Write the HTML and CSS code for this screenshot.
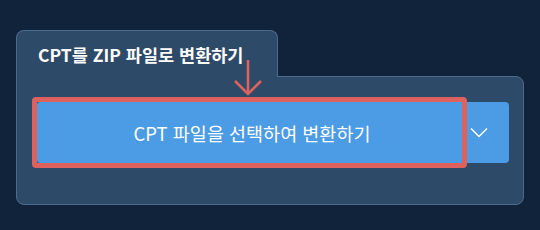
FILE: index.html
```html
<!DOCTYPE html>
<html lang="ko">
<head>
  <meta charset="UTF-8">
  <title>CPT를 ZIP 파일로 변환하기</title>
  <link rel="stylesheet" href="styles.css">
</head>
<body>

  <div class="converter">
    <!-- Tab header -->
    <div class="tab">
      <h2 class="tab-title">CPT를 ZIP 파일로 변환하기</h2>
    </div>

    <!-- Panel with split button -->
    <div class="panel">
      <div class="split-button">
        <button class="btn-main">CPT 파일을 선택하여 변환하기</button>
        <button class="btn-toggle" aria-label="옵션">
          <svg width="18" height="11" viewBox="0 0 18 11">
            <polyline points="1,1.5 9,9.5 17,1.5" fill="none" stroke="#ffffff" stroke-width="1.5"/>
          </svg>
        </button>
      </div>
    </div>

    <!-- Pointer arrow -->
    <svg class="pointer-arrow" width="30" height="40" viewBox="0 0 30 40">
      <line x1="15" y1="1" x2="15" y2="35" stroke="#dd625e" stroke-width="2.6"/>
      <polyline points="2,22 15,35 28,22" fill="none" stroke="#dd625e" stroke-width="2.6"/>
    </svg>
  </div>

</body>
</html>
```

FILE: styles.css
```css
body {
  margin: 0;
  background-color: #11233a;
  font-family: "Noto Sans CJK KR", "Noto Sans", sans-serif;
}

.converter {
  position: relative;
  width: 508px;
  padding: 30px 0 0 16px;
}

.tab {
  position: relative;
  z-index: 1;
  box-sizing: border-box;
  width: 262px;
  height: 47px;
  margin-bottom: -1px;
  padding: 11px 0 0 21px;
  background-color: #2d4a69;
  border: 1px solid #4e6a8b;
  border-bottom: none;
  border-radius: 8px 8px 0 0;
}

.tab-title {
  margin: 0;
  font-size: 17.5px;
  line-height: 25px;
  font-weight: bold;
  color: #ffffff;
  white-space: nowrap;
}

.panel {
  box-sizing: border-box;
  height: 129px;
  padding: 25px 14px 0 20px;
  background-color: #2d4a69;
  border: 1px solid #4e6a8b;
  border-radius: 0 8px 8px 8px;
}

.split-button {
  display: flex;
  height: 61px;
}

.btn-main {
  position: relative;
  flex: 1;
  border: none;
  border-radius: 3px 0 0 3px;
  background-color: #4c9be5;
  color: #ffffff;
  font-family: inherit;
  font-size: 18.5px;
  padding: 0;
  cursor: pointer;
}

/* highlight ring drawn over the main button */
.btn-main::after {
  content: "";
  position: absolute;
  left: -5px;
  top: -5px;
  bottom: -5px;
  right: 0;
  border: 5px solid #dd625e;
  border-radius: 4px;
}

.btn-toggle {
  display: flex;
  align-items: center;
  width: 42px;
  padding: 0 0 0 3px;
  border: none;
  border-radius: 0 4px 4px 0;
  background-color: #4c9be5;
  cursor: pointer;
}

.pointer-arrow {
  position: absolute;
  left: 233px;
  top: 59px;
  z-index: 2;
}
```
